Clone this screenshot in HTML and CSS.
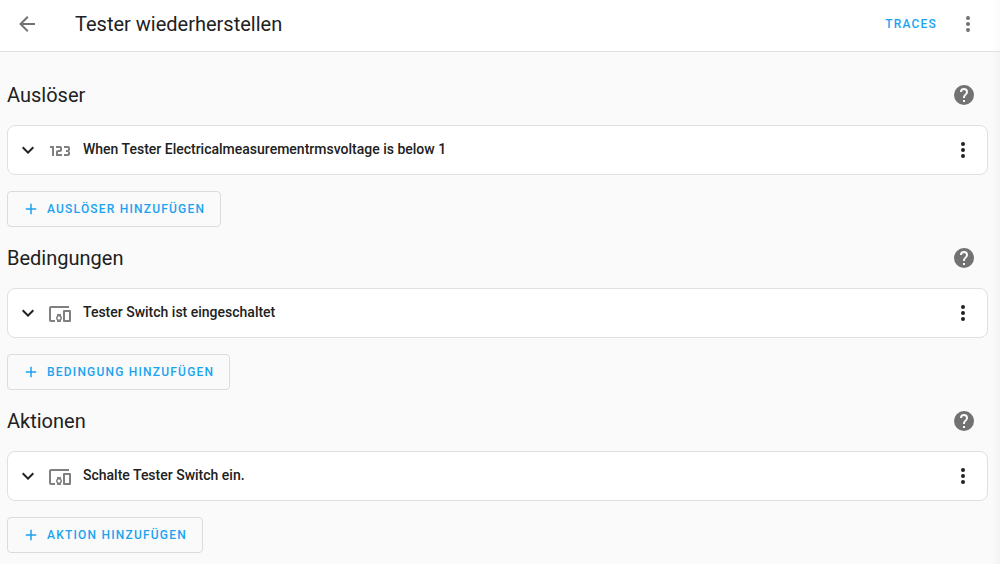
FILE: index.html
```
<!DOCTYPE html>
<html lang="de">
<head>
    <meta charset="UTF-8">
    <meta name="viewport" content="width=device-width, initial-scale=1.0">
    <title>Tester wiederherstellen</title>
    <link rel="stylesheet" href="styles.css">
</head>
<body>
    <!-- icons used several times -->
    <svg class="sprite" aria-hidden="true">
        <symbol id="dots" viewBox="0 0 24 24"><path d="M12,16A2,2 0 0,1 14,18A2,2 0 0,1 12,20A2,2 0 0,1 10,18A2,2 0 0,1 12,16M12,10A2,2 0 0,1 14,12A2,2 0 0,1 12,14A2,2 0 0,1 10,12A2,2 0 0,1 12,10M12,4A2,2 0 0,1 14,6A2,2 0 0,1 12,8A2,2 0 0,1 10,6A2,2 0 0,1 12,4Z"/></symbol>
        <symbol id="help" viewBox="0 0 24 24"><path d="M15.07,11.25L14.17,12.17C13.45,12.89 13,13.5 13,15H11V14.5C11,13.39 11.45,12.39 12.17,11.67L13.41,10.41C13.78,10.05 14,9.55 14,9C14,7.89 13.1,7 12,7A2,2 0 0,0 10,9H8A4,4 0 0,1 12,5A4,4 0 0,1 16,9C16,9.88 15.64,10.67 15.07,11.25M13,19H11V17H13M12,2A10,10 0 0,0 2,12A10,10 0 0,0 12,22A10,10 0 0,0 22,12C22,6.47 17.5,2 12,2Z"/></symbol>
        <symbol id="chevron" viewBox="0 0 24 24"><path d="M7.41,8.58L12,13.17L16.59,8.58L18,10L12,16L6,10L7.41,8.58Z"/></symbol>
        <symbol id="plus" viewBox="0 0 24 24"><path d="M19,13H13V19H11V13H5V11H11V5H13V11H19V13Z"/></symbol>
        <symbol id="devices" viewBox="0 0 24 24"><path d="M3 6H21V4H3C1.9 4 1 4.9 1 6V18C1 19.1 1.9 20 3 20H7V18H3V6M13 12H9V13.78C8.39 14.33 8 15.11 8 16C8 16.89 8.39 17.67 9 18.22V20H13V18.22C13.61 17.67 14 16.88 14 16S13.61 14.33 13 13.78V12M11 17.5C10.17 17.5 9.5 16.83 9.5 16S10.17 14.5 11 14.5 12.5 15.17 12.5 16 11.83 17.5 11 17.5M22 8H16C15.5 8 15 8.5 15 9V19C15 19.5 15.5 20 16 20H22C22.5 20 23 19.5 23 19V9C23 8.5 22.5 8 22 8M21 18H17V10H21V18Z"/></symbol>
    </svg>

    <header class="toolbar">
        <button class="icon-btn" aria-label="Zurück">
            <svg class="icon" viewBox="0 0 24 24"><path d="M20,11V13H8L13.5,18.5L12.08,19.92L4.16,12L12.08,4.08L13.5,5.5L8,11H20Z"/></svg>
        </button>
        <h1 class="title">Tester wiederherstellen</h1>
        <a class="traces" href="#">TRACES</a>
        <button class="icon-btn" aria-label="Menü"><svg class="icon"><use href="#dots"/></svg></button>
    </header>

    <main class="content">
        <!-- Auslöser -->
        <section>
            <div class="section-head">
                <h2>Auslöser</h2>
                <button class="icon-btn" aria-label="Hilfe"><svg class="icon"><use href="#help"/></svg></button>
            </div>
            <div class="card">
                <button class="icon-btn dark" aria-label="Aufklappen"><svg class="icon"><use href="#chevron"/></svg></button>
                <svg class="icon type" viewBox="0 0 24 24"><path d="M4,17V9H2V7H6V17H4M22,15C22,16.11 21.1,17 20,17H16V15H20V13H18V11H20V9H16V7H20A2,2 0 0,1 22,9V10.5A1.5,1.5 0 0,1 20.5,12A1.5,1.5 0 0,1 22,13.5V15M14,15V17H8V13C8,11.89 8.9,11 10,11H12V9H8V7H12A2,2 0 0,1 14,9V11C14,12.11 13.1,13 12,13H10V15H14Z"/></svg>
                <h3>When Tester Electricalmeasurementrmsvoltage is below 1</h3>
                <button class="icon-btn dark" aria-label="Optionen"><svg class="icon"><use href="#dots"/></svg></button>
            </div>
            <button class="add"><svg><use href="#plus"/></svg>AUSLÖSER HINZUFÜGEN</button>
        </section>

        <!-- Bedingungen -->
        <section>
            <div class="section-head">
                <h2>Bedingungen</h2>
                <button class="icon-btn" aria-label="Hilfe"><svg class="icon"><use href="#help"/></svg></button>
            </div>
            <div class="card">
                <button class="icon-btn dark" aria-label="Aufklappen"><svg class="icon"><use href="#chevron"/></svg></button>
                <svg class="icon type"><use href="#devices"/></svg>
                <h3>Tester Switch ist eingeschaltet</h3>
                <button class="icon-btn dark" aria-label="Optionen"><svg class="icon"><use href="#dots"/></svg></button>
            </div>
            <button class="add"><svg><use href="#plus"/></svg>BEDINGUNG HINZUFÜGEN</button>
        </section>

        <!-- Aktionen -->
        <section>
            <div class="section-head">
                <h2>Aktionen</h2>
                <button class="icon-btn" aria-label="Hilfe"><svg class="icon"><use href="#help"/></svg></button>
            </div>
            <div class="card">
                <button class="icon-btn dark" aria-label="Aufklappen"><svg class="icon"><use href="#chevron"/></svg></button>
                <svg class="icon type"><use href="#devices"/></svg>
                <h3>Schalte Tester Switch ein.</h3>
                <button class="icon-btn dark" aria-label="Optionen"><svg class="icon"><use href="#dots"/></svg></button>
            </div>
            <button class="add"><svg><use href="#plus"/></svg>AKTION HINZUFÜGEN</button>
        </section>
    </main>
</body>
</html>
```
FILE: styles.css
```
* {
    box-sizing: border-box;
}
body {
    margin: 0;
    font-family: Roboto, "Noto Sans", sans-serif;
    font-size: 14px;
    color: #212121;
    background: linear-gradient(to left, #f3f3f3, #fafafa 8px);
}
h1, h2, h3 {
    margin: 0;
    font-weight: 400;
}
.sprite {
    display: none;
}
.icon {
    display: block;
    width: 24px;
    height: 24px;
    fill: currentColor;
}
.icon-btn {
    padding: 0;
    border: 0;
    background: none;
    color: #727272;
    cursor: pointer;
}
.icon-btn.dark {
    color: #212121;
}

/* top bar */
.toolbar {
    display: flex;
    align-items: center;
    padding: 12px 20px 15px 15px;
    border-bottom: 1px solid #e0e0e0;
    background: linear-gradient(to left, #fafafa, #fff 8px);
}
.title {
    flex: 1;
    margin-left: 36px;
    font-size: 20px;
    line-height: 24px;
}
.traces {
    margin-right: 19px;
    color: #1ba3f0;
    font-size: 12px;
    font-weight: 500;
    letter-spacing: 0.1em;
    text-decoration: none;
}

/* sections */
.content {
    padding: 12px 12px 10px 7px;
}
.section-head {
    display: flex;
    align-items: center;
    justify-content: space-between;
    height: 61px;
    padding-right: 12px;
}
.section-head h2 {
    font-size: 20px;
    line-height: 24px;
}
.card {
    display: flex;
    align-items: center;
    height: 50px;
    margin-bottom: 16px;
    padding: 0 12px 0 8px;
    border: 1px solid #e0e0e0;
    border-radius: 8px;
    background: #fff;
}
.card .type {
    margin: 1px 11px 0 8px;
    color: #808080;
}
.card h3 {
    flex: 1;
    padding-bottom: 2px;
    font-size: 14px;
    line-height: 20px;
    font-weight: 500;
}
.add {
    display: flex;
    align-items: center;
    gap: 7px;
    height: 36px;
    padding: 0 15px 0 14px;
    border: 1px solid #dcdcdc;
    border-radius: 4px;
    background: none;
    color: #1ba3f0;
    font-family: inherit;
    font-size: 12px;
    font-weight: 500;
    letter-spacing: 0.1em;
    cursor: pointer;
}
.add svg {
    width: 18px;
    height: 18px;
    fill: currentColor;
}
```
